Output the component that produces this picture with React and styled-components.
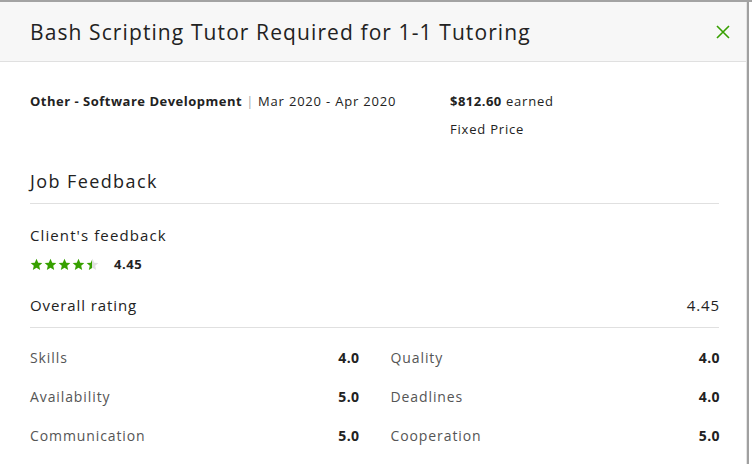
import React from "react";
import styled, { createGlobalStyle } from "styled-components";

const Global = createGlobalStyle`
  html, body { margin: 0; padding: 0; background: #fff; }
  body { font-family: "Open Sans", Lato, Arial, sans-serif; color: #222; }
  * { box-sizing: border-box; }
`;

const Frame = styled.div`
  width: 752px;
  height: 464px;
  overflow: hidden;
  border-top: 2px solid #a3a3a3;
  display: flex;
`;

const Modal = styled.div`
  width: 747px;
  border-right: 1px solid #e4e4e4;
  display: flex;
  flex-direction: column;
`;

const Edge = styled.div`
  width: 2px;
  background: #a0a0a0;
  margin-top: -2px;
`;

const Header = styled.div`
  height: 60px;
  background: #f7f7f7;
  border-bottom: 1px solid #e0e0e0;
  display: flex;
  align-items: center;
  justify-content: space-between;
  padding: 0 15px 0 30px;
`;

const Title = styled.h1`
  margin: 0;
  font-size: 21px;
  font-weight: 400;
  color: #222;
  letter-spacing: 1.1px;
`;

const Close = styled.button`
  border: 0;
  background: none;
  padding: 0;
  width: 16px;
  height: 16px;
  display: flex;
  cursor: pointer;
`;

const Body = styled.div`
  padding: 0 27px 0 30px;
  display: flex;
  flex-direction: column;
`;

const Meta = styled.div`
  display: grid;
  grid-template-columns: 420px 1fr;
  padding-top: 30px;
  font-size: 13px;
  line-height: 18px;
  letter-spacing: 0.8px;
`;

const MetaCol = styled.div`
  display: flex;
  flex-direction: column;
  gap: 10px;
`;

const Strong = styled.b`
  font-weight: 700;
  letter-spacing: 0.5px;
`;

const Sep = styled.span`
  color: #aaa;
  margin: 0 4px;
`;

const SectionTitle = styled.h2`
  margin: 31px 0 0;
  font-size: 18px;
  font-weight: 400;
  line-height: 24px;
  letter-spacing: 1.4px;
  padding-bottom: 10px;
  border-bottom: 1px solid #e0e0e0;
`;

const SubTitle = styled.div`
  margin-top: 21px;
  font-size: 15px;
  line-height: 20px;
  letter-spacing: 1.1px;
`;

const StarRow = styled.div`
  display: flex;
  align-items: center;
  margin-top: 10px;
  gap: 15px;
`;

const Stars = styled.div`
  display: flex;
  gap: 1px;
`;

const Score = styled.span`
  font-size: 13px;
  font-weight: 700;
  letter-spacing: 0.6px;
`;

const Overall = styled.div`
  display: flex;
  justify-content: space-between;
  margin-top: 22px;
  font-size: 15px;
  line-height: 20px;
  letter-spacing: 0.9px;
  padding-bottom: 12px;
  border-bottom: 1px solid #e0e0e0;
`;

const TrailFix = styled.span`
  margin-right: ${(p) => p.$trim || 0}px;
`;

const Grid = styled.div`
  display: grid;
  grid-template-columns: 1fr 1fr;
  column-gap: 32px;
  row-gap: 21px;
  margin-top: 21px;
`;

const Item = styled.div`
  display: flex;
  justify-content: space-between;
  font-size: 14px;
  line-height: 18px;
  letter-spacing: 0.9px;
`;

const Label = styled.span`
  color: #555;
`;

const Value = styled.span`
  font-weight: 700;
  letter-spacing: 0.4px;
  margin-right: -1px;
`;

const Star = ({ fill = 1, id }) => (
  <svg width="13" height="13" viewBox="0 0 24 24">
    <defs>
      <linearGradient id={id}>
        <stop offset={fill} stopColor="#37a000" />
        <stop offset={fill} stopColor="#e0e0e0" />
      </linearGradient>
    </defs>
    <path
      d="M12 1.5l3.2 7.1 7.6.7-5.8 5.1 1.8 7.6L12 18l-6.8 4 1.8-7.6L1.2 9.3l7.6-.7z"
      fill={`url(#${id})`}
    />
  </svg>
);

const items = [
  ["Skills", "4.0"],
  ["Quality", "4.0"],
  ["Availability", "5.0"],
  ["Deadlines", "4.0"],
  ["Communication", "5.0"],
  ["Cooperation", "5.0"],
];

export default function App() {
  return (
    <Frame>
      <Global />
      <Modal>
        <Header>
          <Title>Bash Scripting Tutor Required for 1-1 Tutoring</Title>
          <Close aria-label="Close">
            <svg width="16" height="16" viewBox="0 0 16 16">
              <path d="M2 2L14 14M14 2L2 14" stroke="#37a000" strokeWidth="1.6" />
            </svg>
          </Close>
        </Header>
        <Body>
          <Meta>
            <MetaCol>
              <div>
                <Strong>Other - Software Development</Strong>
                <Sep>|</Sep>Mar 2020 - Apr 2020
              </div>
            </MetaCol>
            <MetaCol>
              <div>
                <Strong>$812.60</Strong> earned
              </div>
              <div>Fixed Price</div>
            </MetaCol>
          </Meta>
          <SectionTitle>Job Feedback</SectionTitle>
          <SubTitle>Client's feedback</SubTitle>
          <StarRow>
            <Stars>
              {[1, 1, 1, 1, 0.45].map((f, i) => (
                <Star key={i} fill={f} id={`s${i}`} />
              ))}
            </Stars>
            <Score>4.45</Score>
          </StarRow>
          <Overall>
            <span>Overall rating</span>
            <TrailFix $trim={-1}>4.45</TrailFix>
          </Overall>
          <Grid>
            {items.map(([l, v]) => (
              <Item key={l}>
                <Label>{l}</Label>
                <Value>{v}</Value>
              </Item>
            ))}
          </Grid>
        </Body>
      </Modal>
      <Edge />
    </Frame>
  );
}
